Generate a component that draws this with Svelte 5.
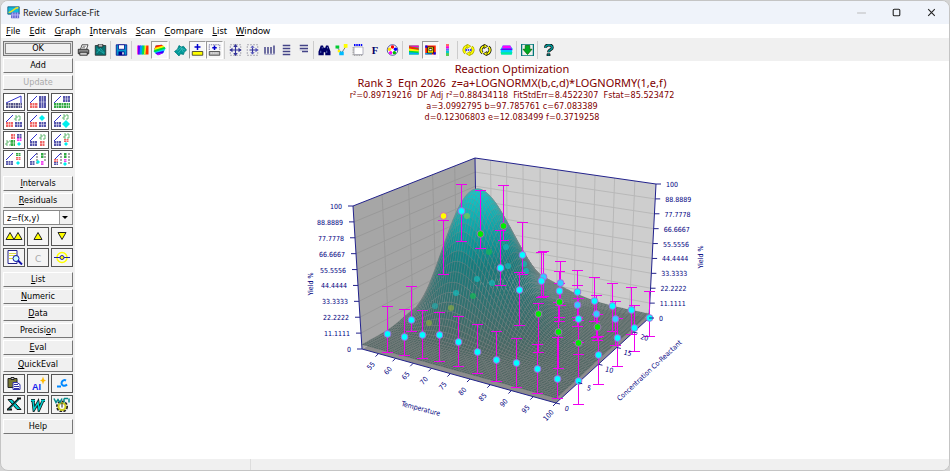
<script>
    const menus = ["File", "Edit", "Graph", "Intervals", "Scan", "Compare", "List", "Window"];

    const cycle = (ring, inner) =>
        `<path d="M7 3a5 5 0 0 0-3 9M9 13a5 5 0 0 0 3-9" fill="none" stroke="${ring}" stroke-width="4"/><path d="M7 3a5 5 0 0 0-3 9M9 13a5 5 0 0 0 3-9" fill="none" stroke="#ff0" stroke-width="2"/><path d="M6 0l5 3-5 3zM10 10l-5 3 5 3z" fill="#ff0" stroke="${ring}"/>${inner}`;

    const toolIcons = {
        print: `<path d="M4 7l2-6h8l-2 6" fill="#fff" stroke="#222"/><path d="M1 7h13l1 1v5H1z" fill="#888" stroke="#111"/><path d="M3 11h10v4H3z" fill="#ccc" stroke="#111"/><path d="M7 3h4M6 5h4" stroke="#555"/>`,
        copy: `<path d="M1 2h14v13H1z" fill="#087070" stroke="#222"/><path d="M5 0h6v4H5z" fill="#bbb" stroke="#222"/><path d="M3 12l5-6 5 6M3 6l10 7" stroke="#2bb" fill="none"/>`,
        save: `<path d="M1 1h14v14H1z" fill="#09c" stroke="#008"/><path d="M4 1h8v6H4z" fill="#fff" stroke="#008"/><path d="M4 10h8v5H4z" fill="#008"/><path d="M9 11h2v3H9z" fill="#fff"/>`,
        hues: `<path d="M1 2h2v12H1z" fill="#f0c"/><path d="M2 2h4l-1 12H2z" fill="#60f"/><path d="M5 2h4l-1 12H4z" fill="#09f"/><path d="M8 2h3l1 12H7z" fill="#0d5"/><path d="M11 2h2l-1 12h-2z" fill="#fe0"/><path d="M13 2h3v12h-4z" fill="#f30"/>`,
        contour: `<path d="M3 2l8-1 5 5-3 6-7 3-6-5z" fill="#0cf"/><path d="M3 2l8-1 2 2L1 7z" fill="#f20"/><path d="M2 5l11-3 2 2L1 9z" fill="#fe0"/><path d="M1 8l14-4 1 2-15 5z" fill="#0d3"/><path d="M2 12l12-3-1 3-7 3z" fill="#30f"/><path d="M4 13l9-1-7 3z" fill="#d0f"/>`,
        surface: `<path d="M0 10l4-3 2-5 3 2 3-1 4 5-3 3-1 3-4-1-2 3-3-3z" fill="#099" stroke="#077"/><path d="M3 9l5-4 6 3M5 12l5-6M8 4l4 7" stroke="#4bb" fill="none"/>`,
        plusYellow: `<path d="M8 0v8M4 4h8" stroke="#00c" stroke-width="2"/><path d="M1 10h14v5H1z" fill="#ff0" stroke="#222"/>`,
        plusDashed: `<path d="M1 8V1h14v7" fill="none" stroke="#558" stroke-dasharray="2 1"/><path d="M8 2v6M5 5h6" stroke="#00c" stroke-width="2"/><path d="M1 10h14v5H1z" fill="#bbb" stroke="#333"/><path d="M3 12h10" stroke="#fff" stroke-dasharray="2 1"/>`,
        move: `<path d="M1 1h14v14H1z" fill="none" stroke="#778" stroke-dasharray="2 2"/><path d="M8 1v14M1 8h14" stroke="#339" stroke-width="1.5"/><path d="M5 4l3-4 3 4zM5 12l3 4 3-4zM4 5L0 8l4 3zM12 5l4 3-4 3z" fill="#339"/>`,
        moveRight: `<path d="M1 1h14v14H1z" fill="none" stroke="#778" stroke-dasharray="2 2"/><path d="M8 5v7M4 8h9" stroke="#339" stroke-width="1.5"/><path d="M5 5l3-3 3 3zM12 5l4 3-4 3zM5 11l3 3 3-3z" fill="#55b"/>`,
        columns: `<path d="M2 4v9M6 4v9M10 4v9M14 2v11" stroke="#448" stroke-width="2"/><path d="M1 14h14" stroke="#aac"/>`,
        rows: `<path d="M3 2h10M3 6h10M3 10h10M3 14h10" stroke="#448" stroke-width="2"/>`,
        rowsShort: `<path d="M3 2h11M3 6h11M6 10h8" stroke="#448" stroke-width="2"/><path d="M3 8h11" stroke="#aac"/>`,
        find: `<path d="M3 2h3l1 3h2l1-3h3l3 8v5H9v-4H7v4H0v-5z" fill="#006"/><path d="M3 9v3M11 9v3M5 4v2M12 4v2" stroke="#78c"/>`,
        nodes: `<path d="M2 4l6 8 6-9" stroke="#555" fill="none"/><path d="M0 2h5v4H0z" fill="#0c3"/><path d="M11 0h5v5h-5z" fill="#ff0"/><path d="M5 10h6v5H5z" fill="#0bf"/><path d="M3 8h3v3H3z" fill="#fe0"/>`,
        frame: `<path d="M2 4h12v10H2z" fill="#fff" stroke="#99a"/><path d="M2 1h12" stroke="#00f" stroke-width="3" stroke-dasharray="2 1"/><path d="M1 4v11h13" stroke="#aaa" stroke-width="2" fill="none" stroke-dasharray="2 1"/>`,
        font: `<text x="3" y="13" font-family="Liberation Serif" font-weight="bold" font-size="14" fill="#006">F</text>`,
        palette: `<circle cx="8" cy="8" r="7" fill="#fff" stroke="#228"/><circle cx="8" cy="4" r="2.3" fill="#f00"/><circle cx="4" cy="7" r="2.3" fill="#fd0"/><circle cx="12" cy="7" r="2.3" fill="#00f"/><circle cx="5.5" cy="11.5" r="2.3" fill="#f0f"/><circle cx="10.5" cy="11.5" r="2.3" fill="#0b0"/>`,
        bands: `<path d="M2 2h13v12H2z" fill="#0d3"/><path d="M2 2h13v3L2 3z" fill="#f0c"/><path d="M2 3l13 3v2L2 6z" fill="#f20"/><path d="M2 6l13 2v2L2 9z" fill="#fe0"/><path d="M2 11l13 1v2H2z" fill="#0af"/>`,
        target: `<path d="M1 2h14v12H1z" fill="#f20"/><path d="M1 2h3v3H1zM12 11h3v3h-3z" fill="#00f"/><path d="M1 12h9v2H1z" fill="#0af"/><path d="M4 4h8v8H4z" fill="#fe0" stroke="#111"/><path d="M6 6h4v3H6z" fill="#fff" stroke="#111"/>`,
        scale: `<path d="M6 0h4v3H6z" fill="#f66"/><path d="M6 3h4v3H6z" fill="#f0c"/><path d="M6 6h4v3H6z" fill="#66f"/><path d="M6 9h4v3H6z" fill="#0cc"/><path d="M6 12h4v4H6z" fill="#5c5"/>`,
        cycleDots: cycle("#aa0", `<path d="M4 8h8" stroke="#00f" stroke-width="2" stroke-dasharray="2 1"/>`),
        cycle: cycle("#111", ""),
        wave: `<path d="M3 2h10l3 4-1 8H1L0 7z" fill="#0cf"/><path d="M3 2h10l2 4H2z" fill="#f0f"/><path d="M2 6h13l1 2H0z" fill="#60f"/><path d="M0 11h16l-1 3H1z" fill="#0e9"/>`,
        download: `<path d="M0 0h16v16H0z" fill="#eee" stroke="#077" stroke-width="2"/><path d="M5 2h6v5h3l-6 7-6-7h3z" fill="#0a2" stroke="#060"/>`,
        help: `<path d="M4 5c0-5 9-5 9 0 0 3-5 2-5 6" fill="none" stroke="#111" stroke-width="4"/><path d="M4 5c0-5 9-5 9 0 0 3-5 2-5 6" fill="none" stroke="#099" stroke-width="2"/><path d="M6 13h4v3H6z" fill="#088" stroke="#111"/>`
    };

    const toolGroups = [
        ["print", "copy"],
        ["save"],
        ["hues", "contour"],
        ["surface", "plusYellow", "plusDashed"],
        ["move", "moveRight", "columns", "rows", "rowsShort"],
        ["find", "nodes", "frame", "font", "palette"],
        ["bands", "target", "scale"],
        ["cycleDots", "cycle"],
        ["wave"],
        ["download"],
        ["help"]
    ];
    const pressed = ["contour", "plusYellow", "plusDashed", "target"];

    // pieces of the small fit-layout pictures, drawn on an 18 x 14 grid
    const slope = `<path d="M1 8L8 1" stroke="#33c" fill="none"/>`;
    const bars = (x, y, w, h, color) =>
        `<path d="M${x} ${y + h / 2}h${w}" stroke="${color}" stroke-width="${h}" stroke-dasharray="2 .5"/><path d="M${x} ${y + h / 2}h${w}" stroke="#fff" stroke-width=".4"/>`;
    const diamond = (x, y, r) => `<path d="M${x} ${y - r}l${r} ${r}-${r} ${r}-${r}-${r}z" fill="#0ee"/>`;
    const squiggle = (x, y) => `<path d="M${x} ${y}h2v2h-2v2h2m1-4h2v4h-2" stroke="#4a5" fill="none" stroke-width=".8"/>`;
    const layouts = [
        `<path d="M1 8L16 1v7" stroke="#33c" fill="none"/>` + bars(1, 8, 16, 5, "#558"),
        slope + bars(1, 8, 8, 5, "#e66") + bars(10, 1, 7, 12, "#55a"),
        slope + bars(1, 8, 16, 5, "#3a4") + bars(10, 1, 7, 6, "#55a"),
        slope + bars(1, 8, 7, 5, "#e66") + bars(10, 8, 7, 5, "#55a") + squiggle(10, 2),
        slope + bars(1, 8, 7, 5, "#e66") + bars(10, 8, 7, 5, "#55a") + diamond(13, 4, 3),
        slope + bars(1, 8, 7, 5, "#55a") + squiggle(10, 1) + diamond(13, 10, 4),
        squiggle(1, 8) + bars(6, 1, 4, 5, "#e66") + bars(6, 7, 4, 6, "#3a4") + bars(12, 1, 5, 4, "#55a") + bars(12, 5, 5, 3, "#e4e") + diamond(14, 11, 2),
        slope + bars(1, 8, 7, 5, "#55a") + squiggle(11, 2) + bars(11, 8, 5, 5, "#e66"),
        slope + bars(1, 8, 7, 5, "#55a") + squiggle(11, 1) + bars(11, 6, 5, 3, "#e66") + diamond(13, 11, 2),
        slope + bars(1, 9, 7, 4, "#55a") + bars(11, 1, 5, 3, "#3a4") + bars(11, 5, 5, 3, "#e66") + diamond(13, 11, 2),
        slope + bars(1, 9, 5, 4, "#55a") + `<path d="M8 1v12M16 1v8" stroke="#555" stroke-dasharray="2 1"/>` + bars(12, 1, 3, 5, "#3a4") + bars(12, 9, 3, 4, "#e4e") + diamond(9, 10, 2),
        slope + bars(1, 7, 4, 3, "#e66") + bars(1, 10, 4, 3, "#55a") + `<path d="M8 1v12M16 1v12" stroke="#555" stroke-dasharray="2 1"/>` + bars(11, 1, 3, 5, "#3a4") + bars(11, 7, 3, 3, "#e4e") + diamond(12, 12, 2)
    ];

    const scrollIcons = [
        ["First", `<path d="M1 10l4-7 4 7zM9 10l4-7 4 7z" fill="#ff0" stroke="#222"/>`],
        ["Up", `<path d="M5 10l4-7 4 7z" fill="#ff0" stroke="#222"/>`],
        ["Down", `<path d="M5 3h8l-4 7z" fill="#ff0" stroke="#222"/>`],
        ["Preview", `<path d="M3 0h9v13H3z" fill="#fff" stroke="#228"/><path d="M4 3h7M4 5h7M4 8h7" stroke="#dd4"/><circle cx="11" cy="8" r="3" fill="#cff" stroke="#11a"/><path d="M13 10l4 4" stroke="#11a" stroke-width="2"/>`],
        ["C", `<text x="6" y="11" font-family="DejaVu Sans" font-size="9" fill="#aaa">C</text>`],
        ["Point", `<circle cx="9" cy="7" r="5" fill="none" stroke="#ff0" stroke-width="1.5"/><path d="M1 7h16" stroke="#22a"/><circle cx="9" cy="7" r="2" fill="#ff0" stroke="#22a"/>`]
    ];

    const exportIcons = [
        ["Paste", `<path d="M3 2h9v9H3z" fill="#773" stroke="#222"/><path d="M6 1h3v2H6z" fill="#ccc" stroke="#222"/><path d="M8 6h4l3 2v5H8z" fill="#fff" stroke="#33a"/><path d="M9 8h4M9 10h5M9 12h5" stroke="#33a"/>`],
        ["AI", `<text x="3" y="13" font-family="Liberation Sans" font-weight="bold" font-size="9" fill="#12e">AI</text><path d="M14 0l1 3 2 1-2 1-1 3-1-3-2-1 2-1z" fill="#fb0"/>`],
        ["C code", `<path d="M13 4c-4-2-6 4-3 5 2 1 3 0 4-1M4 10h4" fill="none" stroke="#08f" stroke-width="2"/>`],
        ["Excel", `<path d="M3 2h4l9 10h-4z" fill="#0cc" stroke="#111"/><path d="M14 1L3 12M2 12h5M12 1h4" stroke="#111" stroke-width="2"/><path d="M14 2L4 12" stroke="#0bb"/>`],
        ["Word", `<path d="M4 3l1 9 4-7 1 7 4-9M2 3h4M12 3h4" fill="none" stroke="#111" stroke-width="3"/><path d="M4 3l1 9 4-7 1 7 4-9M2 3h4M12 3h4" fill="none" stroke="#0cc" stroke-width="1.5"/>`],
        ["Word settings", `<circle cx="9" cy="9" r="4" fill="none" stroke="#222" stroke-width="4" stroke-dasharray="2 1"/><circle cx="9" cy="9" r="3.5" fill="#fff" stroke="#cc2" stroke-width="2"/><path d="M1 1l2 4 2-3 2 3 2-4m2 0v4m0-4h4M16 1v4" fill="none" stroke="#088" stroke-width="1.5"/><path d="M9 5v5" stroke="#222"/>`]
    ];

    // corners of the plot box: left, front, right, back
    const floor = square([362, 349], [556, 403], [649, 318], [477, 285]);
    const roof = square([353, 206], [561, 252], [656, 184], [475, 158]);

    // perspective mapping of the unit square onto four screen points
    function square(a, b, c, d) {
        const sx = a[0] - b[0] + c[0] - d[0];
        const sy = a[1] - b[1] + c[1] - d[1];
        const dx1 = b[0] - c[0], dx2 = d[0] - c[0];
        const dy1 = b[1] - c[1], dy2 = d[1] - c[1];
        const det = dx1 * dy2 - dx2 * dy1;
        const g = (sx * dy2 - dx2 * sy) / det;
        const h = (dx1 * sy - sx * dy1) / det;
        return (u, v) => {
            const w = g * u + h * v + 1;
            return [
                ((b[0] - a[0] + g * b[0]) * u + (d[0] - a[0] + h * d[0]) * v + a[0]) / w,
                ((b[1] - a[1] + g * b[1]) * u + (d[1] - a[1] + h * d[1]) * v + a[1]) / w
            ];
        };
    }

    function project(u, v, z) {
        const p = floor(u, v);
        const q = roof(u, v);
        return [p[0] + (q[0] - p[0]) * z, p[1] + (q[1] - p[1]) * z];
    }

    const str = (...pts) => pts.map((p) => p[0].toFixed(1) + "," + p[1].toFixed(1)).join(" ");
    const bell = (x, c, d) => (x <= 0 ? 0 : Math.exp(-0.5 * (Math.log(x / c) / d) ** 2));
    const yieldAt = (u, v) =>
        (3.0992795 + 97.785761 * bell(50 + 50 * u, 67.083389, 0.12306803) * bell(25 * v, 12.083499, 0.3719258)) / 100;

    const N = 72;
    const cells = [];
    for (let i = 0; i < N; i++) {
        for (let j = N - 1; j >= 0; j--) {
            const u0 = i / N, u1 = (i + 1) / N, v0 = j / N, v1 = (j + 1) / N;
            const z = yieldAt((u0 + u1) / 2, (v0 + v1) / 2);
            const t = Math.min(1, z * 1.6);
            const top = Math.max(0, z - 0.55) * 2;
            const rgb = [82 - 70 * t, 100 + 26 * t + 85 * top, 96 + 32 * t + 85 * top].map(Math.round);
            cells.push({
                points: str(
                    project(u0, v0, yieldAt(u0, v0)),
                    project(u1, v0, yieldAt(u1, v0)),
                    project(u1, v1, yieldAt(u1, v1)),
                    project(u0, v1, yieldAt(u0, v1))
                ),
                fill: `rgb(${rgb})`
            });
        }
    }

    const walls = [
        { shade: "#a6a6a6", line: "#999", points: str(project(0, 0, 0), project(0, 0, 1), project(0, 1, 1), project(0, 1, 0)) },
        { shade: "#cecece", line: "#b8b8b8", points: str(project(0, 1, 0), project(0, 1, 1), project(1, 1, 1), project(1, 1, 0)) }
    ];
    const leftGrid = [];
    const rightGrid = [];
    for (let k = 1; k < 9; k++) {
        leftGrid.push(str(project(0, 0, k / 9), project(0, 1, k / 9)));
        rightGrid.push(str(project(0, 1, k / 9), project(1, 1, k / 9)));
    }
    for (let k = 1; k < 5; k++) leftGrid.push(str(project(0, k / 5, 0), project(0, k / 5, 1)));
    for (let k = 1; k < 10; k++) rightGrid.push(str(project(k / 10, 1, 0), project(k / 10, 1, 1)));

    const levels = ["0", "11.1111", "22.2222", "33.3333", "44.4444", "55.5556", "66.6667", "77.7778", "88.8889", "100"];
    const zTicks = levels.map((label, k) => ({ label, left: project(0, 0, k / 9), right: project(1, 1, k / 9) }));
    const xTicks = [55, 60, 65, 70, 75, 80, 85, 90, 95, 100].map((t) => ({ label: t, at: floor((t - 50) / 50, 0) }));
    const yTicks = [0, 5, 10, 15, 20].map((c) => ({ label: c, at: floor(1, c / 25) }));

    // x, y, bar top, bar bottom, colour
    const samples = [
        [443, 216, 220, 274, "#ff0"], [461, 211, 184, 241, "#0ff"], [480, 234, 190, 248, "#0e0"],
        [503, 226, 185, 240, "#0e0"], [500, 268, 230, 285, "#0ff"], [411, 320, 286, 331, "#0ff"],
        [387, 334, 306, 352, "#0ff"], [404, 337, 309, 355, "#0ff"], [422, 335, 310, 358, "#0ff"],
        [439, 335, 312, 361, "#0ff"], [458, 342, 316, 366, "#0ff"], [477, 352, 324, 373, "#0ff"],
        [496, 360, 331, 381, "#0ff"], [516, 363, 338, 387, "#0ff"], [537, 369, 344, 393, "#0ff"],
        [557, 379, 337, 398, "#0ff"], [522, 255, 222, 274, "#0ff"], [519, 290, 272, 325, "#0ff"],
        [543, 277, 251, 296, "#3cf"], [541, 281, 252, 297, "#0ff"], [538, 314, 303, 352, "#0e0"],
        [560, 283, 261, 305, "#3cf"], [559, 291, 271, 317, "#0ff"], [559, 302, 283, 321, "#0e0"],
        [558, 332, 302, 368, "#0e0"], [577, 292, 270, 317, "#0ff"], [577, 305, 285, 326, "#3cf"],
        [578, 319, 298, 342, "#0ff"], [578, 343, 320, 354, "#0e0"], [578, 381, 354, 404, "#0ff"],
        [594, 301, 277, 321, "#0ff"], [596, 314, 295, 337, "#3cf"], [597, 327, 314, 340, "#0e0"],
        [598, 355, 336, 384, "#0ff"], [612, 306, 283, 331, "#0ff"], [615, 319, 301, 345, "#3cf"],
        [617, 338, 318, 366, "#0ff"], [631, 310, 287, 334, "#0ff"], [634, 328, 305, 351, "#0ff"],
        [649, 318, 291, 336, "#0ff"]
    ];
    const hidden = [
        [467, 216, "#7c5"], [489, 252, "#1b5"], [506, 247, "#1bb"], [508, 266, "#1bb"], [477, 279, "#1bb"],
        [492, 283, "#1bb"], [456, 293, "#1bb"], [473, 296, "#1b5"], [435, 306, "#2aa"], [451, 308, "#8a4"],
        [429, 323, "#8a4"], [524, 264, "#1bb"], [526, 271, "#1bb"]
    ];
</script>

{#snippet wide(label, key = 0)}
    <button class="wide">{label.slice(0, key)}<u>{label[key]}</u>{label.slice(key + 1)}</button>
{/snippet}

{#snippet tiles(list)}
    {#each list as [name, art]}
        <button class="tile" aria-label={name}><svg viewBox="0 0 18 14">{@html art}</svg></button>
    {/each}
{/snippet}

<div class="window">
    <header class="titlebar">
        <svg class="logo" viewBox="0 0 16 16">
            <path d="M1 1h14v9H1z" fill="#1bd" stroke="#157" />
            <path d="M2 8c5 0 6-6 12-6" stroke="#ed2" stroke-width="2" fill="none" />
            <path d="M5 8h10v7H5z" fill="#66c" />
            <path d="M7 8v7M10 8v7M13 8v7M5 11h10" stroke="#bbf" />
        </svg>
        <h1>Review Surface-Fit</h1>
        <button class="control faded" aria-label="Minimize"><svg viewBox="0 0 10 10"><path d="M1 5.5h8" /></svg></button>
        <button class="control" aria-label="Maximize"><svg viewBox="0 0 10 10"><rect x="2" y="2" width="6" height="6" rx="1" /></svg></button>
        <button class="control" aria-label="Close"><svg viewBox="0 0 10 10"><path d="M2 2l6 6M8 2L2 8" /></svg></button>
    </header>

    <nav class="menubar">
        {#each menus as menu}
            <button><u>{menu[0]}</u>{menu.slice(1)}</button>
        {/each}
    </nav>

    <div class="body">
        <aside>
            <button class="wide default">OK</button>
            <button class="wide">Add</button>
            <button class="wide" disabled>Update</button>
            <div class="tiles layouts">
                {#each layouts as art, i}
                    <button class="tile" aria-label={"Layout " + (i + 1)}><svg viewBox="0 0 18 14">{@html art}</svg></button>
                {/each}
            </div>
            {@render wide("Intervals")}
            {@render wide("Residuals")}
            <div class="combo">
                <select aria-label="Function">
                    <option>z=f(x,y)</option>
                </select>
            </div>
            <div class="tiles">{@render tiles(scrollIcons)}</div>
            {@render wide("List")}
            {@render wide("Numeric")}
            {@render wide("Data")}
            {@render wide("Precision", 7)}
            {@render wide("Eval")}
            {@render wide("QuickEval")}
            <div class="tiles">{@render tiles(exportIcons)}</div>
            <button class="wide">Help</button>
        </aside>

        <div class="content">
            <div class="toolbar">
                {#each toolGroups as group}
                    <div class="group">
                        {#each group as name}
                            <button class="tool" class:pressed={pressed.includes(name)} aria-label={name}>
                                <svg viewBox="0 0 16 16">{@html toolIcons[name]}</svg>
                            </button>
                        {/each}
                    </div>
                {/each}
            </div>

            <main>
                <div class="heading">
                    <h2>Reaction Optimization</h2>
                    <p class="equation">Rank 3&nbsp; Eqn 2026&nbsp; z=a+LOGNORMX(b,c,d)*LOGNORMY(1,e,f)</p>
                    <p>r²=0.89719216&nbsp; DF Adj r²=0.88434118&nbsp; FitStdErr=8.4522307&nbsp; Fstat=85.523472</p>
                    <p>a=3.0992795 b=97.785761 c=67.083389</p>
                    <p>d=0.12306803 e=12.083499 f=0.3719258</p>
                </div>

                <svg class="plot" viewBox="75 125 874 334">
                    {#each walls as wall}
                        <polygon points={wall.points} fill={wall.shade} />
                    {/each}
                    {#each leftGrid as line}
                        <polyline points={line} stroke={walls[0].line} />
                    {/each}
                    {#each rightGrid as line}
                        <polyline points={line} stroke={walls[1].line} />
                    {/each}
                    <polygon points={str(floor(0, 0), floor(1, 0), floor(1, 1), floor(0, 1))} fill="#8c8c8c" />
                    <polyline class="axis" points={str(project(0, 1, 0), project(0, 1, 1))} />

                    <g class="mesh">
                        {#each cells as cell}
                            <polygon points={cell.points} fill={cell.fill} />
                        {/each}
                    </g>

                    <polyline
                        class="axis"
                        points={str(project(0, 0, 1), project(0, 0, 0), project(1, 0, 0), project(1, 1, 0), project(1, 1, 1), project(0, 1, 1), project(0, 0, 1))}
                    />

                    {#each hidden as [x, y, color]}
                        <circle cx={x} cy={y} r="3" fill={color} opacity="0.7" />
                    {/each}
                    {#each samples as [x, y, top, bottom, color]}
                        <path class="bar" d="M{x - 5} {top}.5h11M{x}.5 {top}V{bottom}M{x - 5} {bottom}.5h11" />
                    {/each}
                    {#each samples as [x, y, top, bottom, color]}
                        <circle class="sample" cx="{x}.5" cy={y} r="3.4" fill={color} />
                    {/each}

                    {#each zTicks as { label, left, right }}
                        <path class="axis" d="M{left[0]} {left[1]}h-5M{right[0]} {right[1]}h5" />
                        <text x={left[0] - 11} y={left[1] + 3} text-anchor="end">{label}</text>
                        <text x={right[0] + 10} y={right[1] + 3}>{label}</text>
                    {/each}
                    {#each xTicks as { label, at }}
                        <path class="axis" d="M{at[0]} {at[1]}l-3 3" />
                        <text transform="translate({at[0] - 8} {at[1] + 12}) rotate(-48)" y="3" text-anchor="middle">{label}</text>
                    {/each}
                    {#each yTicks as { label, at }}
                        <path class="axis" d="M{at[0]} {at[1]}l4 1" />
                        <text transform="translate({at[0] + 11} {at[1] + 5}) rotate(14)" y="3" text-anchor="middle">{label}</text>
                    {/each}
                    <text transform="translate(310 284) rotate(-90)" y="3" text-anchor="middle">Yield %</text>
                    <text transform="translate(700 257) rotate(-90)" y="3" text-anchor="middle">Yield %</text>
                    <text transform="translate(421 408) rotate(15)" y="3" text-anchor="middle">Temperature</text>
                    <text transform="translate(649 370) rotate(-43)" y="3" text-anchor="middle">Concentration Co-Reactant</text>
                </svg>
            </main>

            <footer>
                <span></span>
                <span></span>
            </footer>
        </div>
    </div>
</div>

<style>
    :global(body) {
        margin: 0;
        background: #d4d4d4;
    }
    .window {
        display: flex;
        flex-direction: column;
        box-sizing: border-box;
        height: 100vh;
        min-height: 440px;
        border: 1px solid #c4c4c4;
        border-radius: 8px;
        overflow: hidden;
        background: #f0f0f0;
        font-family: "DejaVu Sans Condensed", "DejaVu Sans", sans-serif;
        font-size: 9px;
    }
    button {
        margin: 0;
        padding: 0;
        border: none;
        background: none;
        color: #000;
        font: inherit;
    }
    svg {
        display: block;
    }
    h1,
    h2,
    p {
        margin: 0;
        font-weight: normal;
    }
    .titlebar {
        display: flex;
        align-items: center;
        flex: none;
        height: 23px;
        padding-left: 6px;
        background: #eff3fa;
        font-family: "Noto Sans", sans-serif;
    }
    .logo {
        width: 13px;
        height: 13px;
    }
    h1 {
        flex: 1;
        margin-left: 3px;
        color: #222;
        font-size: 9px;
    }
    .control {
        width: 35px;
        height: 23px;
        padding: 0 12px;
    }
    .control svg {
        fill: none;
        stroke: #222;
    }
    .faded svg {
        stroke: #bbb;
    }
    .menubar {
        display: flex;
        flex: none;
        gap: 9px;
        height: 14px;
        padding-left: 5px;
        background: #fff;
        font-family: "Noto Sans", sans-serif;
        line-height: 14px;
    }
    .body {
        display: flex;
        flex: 1;
        min-height: 0;
    }
    aside {
        display: flex;
        flex-direction: column;
        flex: none;
        gap: 2px;
        width: 70px;
        padding: 3px 2px 0;
    }
    .wide {
        flex: none;
        height: 15px;
        border: 1px solid;
        border-color: #fff #777 #777 #fff;
        background: #f0f0f0;
        line-height: 13px;
    }
    .wide:disabled {
        color: #aaa;
    }
    .default {
        border-color: #777;
        box-shadow: inset 0 0 0 1px #ddd, inset 0 0 0 2px #888;
    }
    .tiles {
        display: grid;
        grid-template-columns: repeat(3, 1fr);
        gap: 2px;
        padding-bottom: 3px;
    }
    .layouts {
        row-gap: 1px;
        padding: 1px 0 6px;
    }
    .tile {
        height: 19px;
        padding: 1px;
        border: 1px solid #555;
        background: #f4f4f4;
    }
    .layouts .tile {
        height: 18px;
        background: #fff;
    }
    .tile svg {
        width: 100%;
        height: 100%;
    }
    .combo {
        position: relative;
    }
    .combo::after {
        content: "";
        position: absolute;
        top: 6px;
        right: 5px;
        border: 3px solid transparent;
        border-top-color: #000;
        pointer-events: none;
    }
    select {
        display: block;
        appearance: none;
        width: 100%;
        height: 15px;
        padding: 0 0 0 3px;
        border: 1px solid #888;
        border-radius: 0;
        background: linear-gradient(to left, #f0f0f0 12px, #999 12px, #999 13px, #fff 13px);
        color: #000;
        font: inherit;
    }
    .content {
        display: flex;
        flex-direction: column;
        flex: 1;
        min-width: 0;
    }
    .toolbar {
        display: flex;
        flex: none;
        height: 23px;
        align-items: center;
    }
    .group {
        display: flex;
    }
    .group + .group {
        margin-left: 1px;
        padding-left: 2px;
        border-left: 1px solid #ccc;
    }
    .tool {
        box-sizing: border-box;
        width: 17px;
        height: 18px;
        padding: 2px 1px;
        border: 1px solid transparent;
    }
    .tool svg {
        width: 13px;
        height: 12px;
    }
    .pressed {
        border-color: #999 #fff #fff #999;
        background: #f8f8f8;
    }
    main {
        display: flex;
        flex-direction: column;
        flex: 1;
        min-height: 0;
        background: #fff;
    }
    .heading {
        padding-top: 1px;
        color: #800000;
        font-size: 9px;
        line-height: 11px;
        text-align: center;
    }
    .heading h2,
    .equation {
        font-family: "Noto Sans", sans-serif;
        font-size: 11px;
        line-height: 14px;
    }
    .plot {
        flex: 1;
        width: 100%;
        min-height: 0;
        padding-top: 2px;
        fill: none;
    }
    .plot text {
        fill: #000080;
        font-size: 7px;
    }
    .axis {
        stroke: #22228c;
    }
    .mesh {
        stroke: #8c8c8c;
        stroke-opacity: 0.5;
        stroke-width: 0.5;
    }
    .bar {
        stroke: #f000f0;
    }
    .sample {
        stroke: #c050e0;
        stroke-width: 0.8;
    }
    footer {
        display: flex;
        flex: none;
        height: 11px;
        background: #f0f0f0;
    }
    footer span {
        flex: 1;
    }
    footer span:first-child {
        flex: 0 0 20%;
        border-right: 1px solid #ddd;
    }
</style>
